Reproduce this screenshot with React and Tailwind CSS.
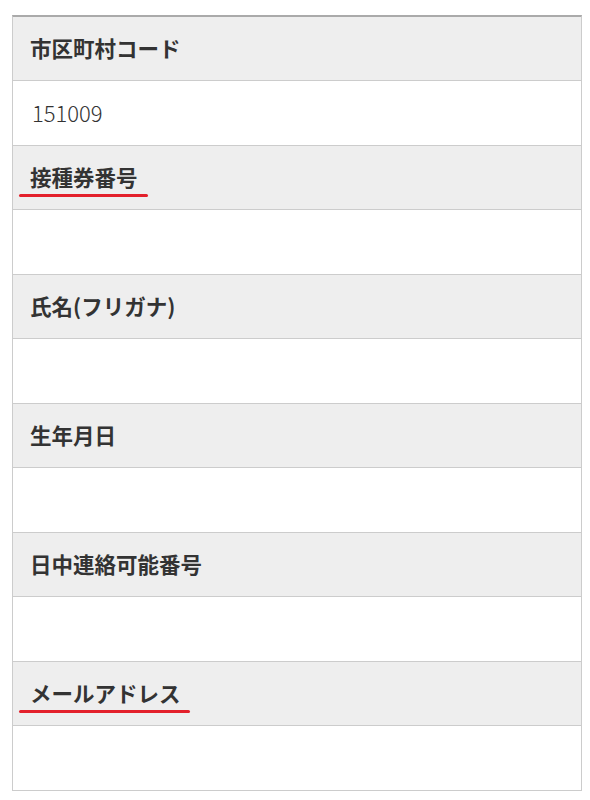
import React from "react";

const rows = [
  { label: "市区町村コード", value: "151009" },
  { label: "接種券番号", value: "", mark: "w-[129px]" },
  { label: "氏名(フリガナ)", value: "" },
  { label: "生年月日", value: "" },
  { label: "日中連絡可能番号", value: "" },
  { label: "メールアドレス", value: "", mark: "w-[171px]" },
];

export default function App() {
  return (
    <div
      className="min-h-[800px] bg-white pt-[15px] pl-[12px]"
      style={{ fontFamily: '"Noto Sans CJK JP", "Noto Sans", sans-serif' }}
    >
      <div className="w-[570px] border-x border-b border-t-2 border-[#cccccc] border-t-[#aaaaaa] text-[#333333]">
        {rows.map((r, i) => (
          <div key={i}>
            <div
              className={`relative flex items-center bg-[#eeeeee] pl-[17px] text-[21.5px] font-bold ${
                i > 0 ? "h-[64.5px] border-t border-[#cccccc]" : "h-[63px]"
              }`}
            >
              {r.label}
              {r.mark && (
                <span
                  className={`absolute left-[6px] top-[48px] h-[3px] rounded-full bg-[#e3202b] ${r.mark}`}
                />
              )}
            </div>
            <div className="flex h-[64.5px] items-center border-t border-[#cccccc] bg-white pl-[19px] text-[22px] font-light">
              {r.value}
            </div>
          </div>
        ))}
      </div>
    </div>
  );
}
